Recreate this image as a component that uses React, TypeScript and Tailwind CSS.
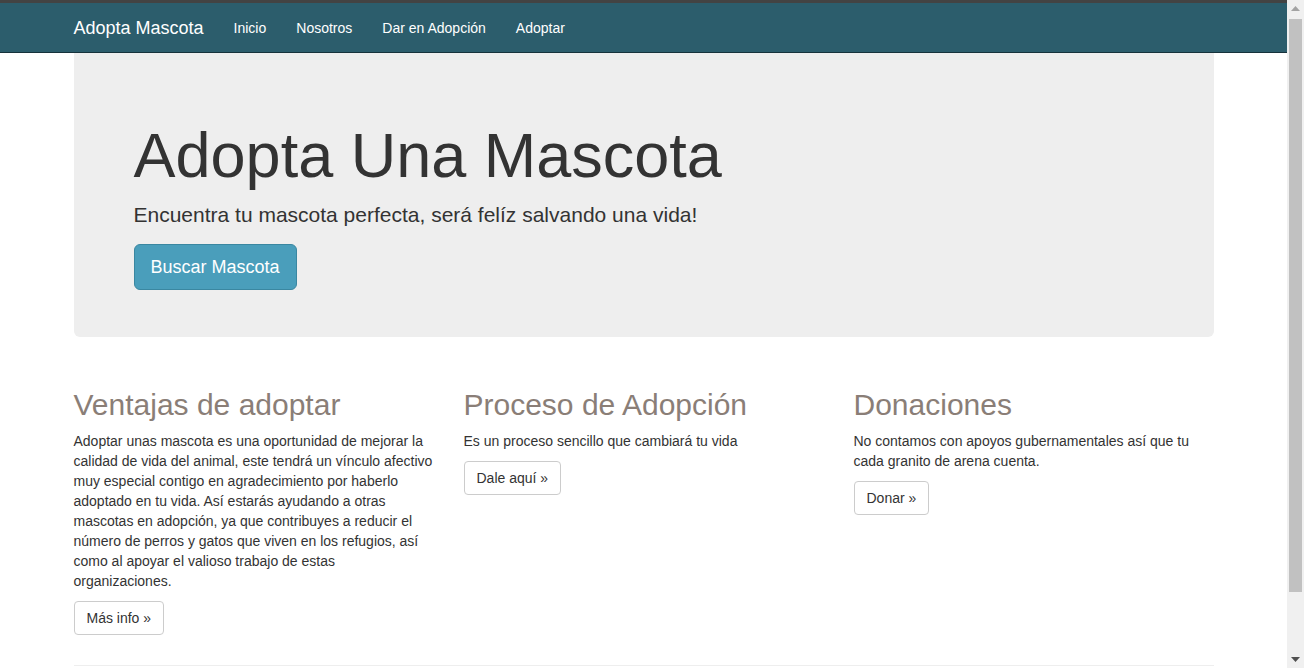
import React from 'react';

const navLinks = ['Inicio', 'Nosotros', 'Dar en Adopción', 'Adoptar'];

const columns = [
  {
    title: 'Ventajas de adoptar',
    text: 'Adoptar unas mascota es una oportunidad de mejorar la calidad de vida del animal, este tendrá un vínculo afectivo muy especial contigo en agradecimiento por haberlo adoptado en tu vida. Así estarás ayudando a otras mascotas en adopción, ya que contribuyes a reducir el número de perros y gatos que viven en los refugios, así como al apoyar el valioso trabajo de estas organizaciones.',
    button: 'Más info »',
  },
  {
    title: 'Proceso de Adopción',
    text: 'Es un proceso sencillo que cambiará tu vida',
    button: 'Dale aquí »',
  },
  {
    title: 'Donaciones',
    text: 'No contamos con apoyos gubernamentales así que tu cada granito de arena cuenta.',
    button: 'Donar »',
  },
];

export default function App() {
  return (
    <div className="flex h-[668px] w-[1304px] overflow-hidden bg-white font-['Liberation_Sans',Arial,sans-serif] text-[14px] leading-[20px] text-[#333]">
      {/* PAGE */}
      <div className="flex w-[1287px] flex-col">
        <div className="h-[3px] bg-[#434343]" />

        {/* NAVBAR */}
        <nav className="h-[50px] border-b border-[#16323b] bg-[#2c5d6c]">
          <div className="mx-auto flex h-full w-[1170px] items-center px-[15px]">
            <a className="pr-[15px] text-[18px] text-white">Adopta Mascota</a>
            {navLinks.map((link) => (
              <a key={link} className="px-[15px] text-[14px] text-white">
                {link}
              </a>
            ))}
          </div>
        </nav>

        <div className="mx-auto w-[1170px] px-[15px]">
          {/* JUMBOTRON */}
          <div className="rounded-b-[6px] bg-[#eeeeee] px-[60px] pt-[48px] pb-[47px]">
            <h1 className="mt-[20px] mb-[10px] text-[63px] leading-[69px] text-[#333]">Adopta Una Mascota</h1>
            <p className="mb-[14px] text-[21px] leading-[30px]">Encuentra tu mascota perfecta, será felíz salvando una vida!</p>
            <a className="inline-block rounded-[6px] border border-[#3a87a1] bg-[#4a9ebb] px-[16px] py-[10px] text-[18px] leading-[24px] text-white">
              Buscar Mascota
            </a>
          </div>

          {/* COLUMNS */}
          <div className="-mx-[15px] mt-[31px] grid grid-cols-3">
            {columns.map((col) => (
              <div key={col.title} className="px-[15px]">
                <h2 className="mt-[20px] mb-[10px] text-[30px] leading-[33px] text-[#8a7e77]">{col.title}</h2>
                <p className="mb-[10px]">{col.text}</p>
                <p className="mb-[10px]">
                  <a className="inline-block rounded-[4px] border border-[#cccccc] bg-white px-[12px] py-[6px] text-[14px] leading-[20px] text-[#333]">
                    {col.button}
                  </a>
                </p>
              </div>
            ))}
          </div>

          <hr className="mt-[20px] border-t border-[#eeeeee]" />
        </div>
      </div>

      {/* SCROLLBAR */}
      <div className="flex w-[17px] flex-col items-center bg-[#f0f0f0]">
        <div className="flex h-[17px] w-full items-center justify-center">
          <svg width="9" height="5" viewBox="0 0 9 5">
            <path d="M0 5 L4.5 0 L9 5 Z" fill="#a3a3a3" />
          </svg>
        </div>
        <div className="mt-[2px] h-[573px] w-[13px] bg-[#c1c1c1]" />
        <div className="flex-1" />
        <div className="flex h-[17px] w-full items-center justify-center">
          <svg width="9" height="5" viewBox="0 0 9 5">
            <path d="M0 0 L9 0 L4.5 5 Z" fill="#505050" />
          </svg>
        </div>
      </div>
    </div>
  );
}
